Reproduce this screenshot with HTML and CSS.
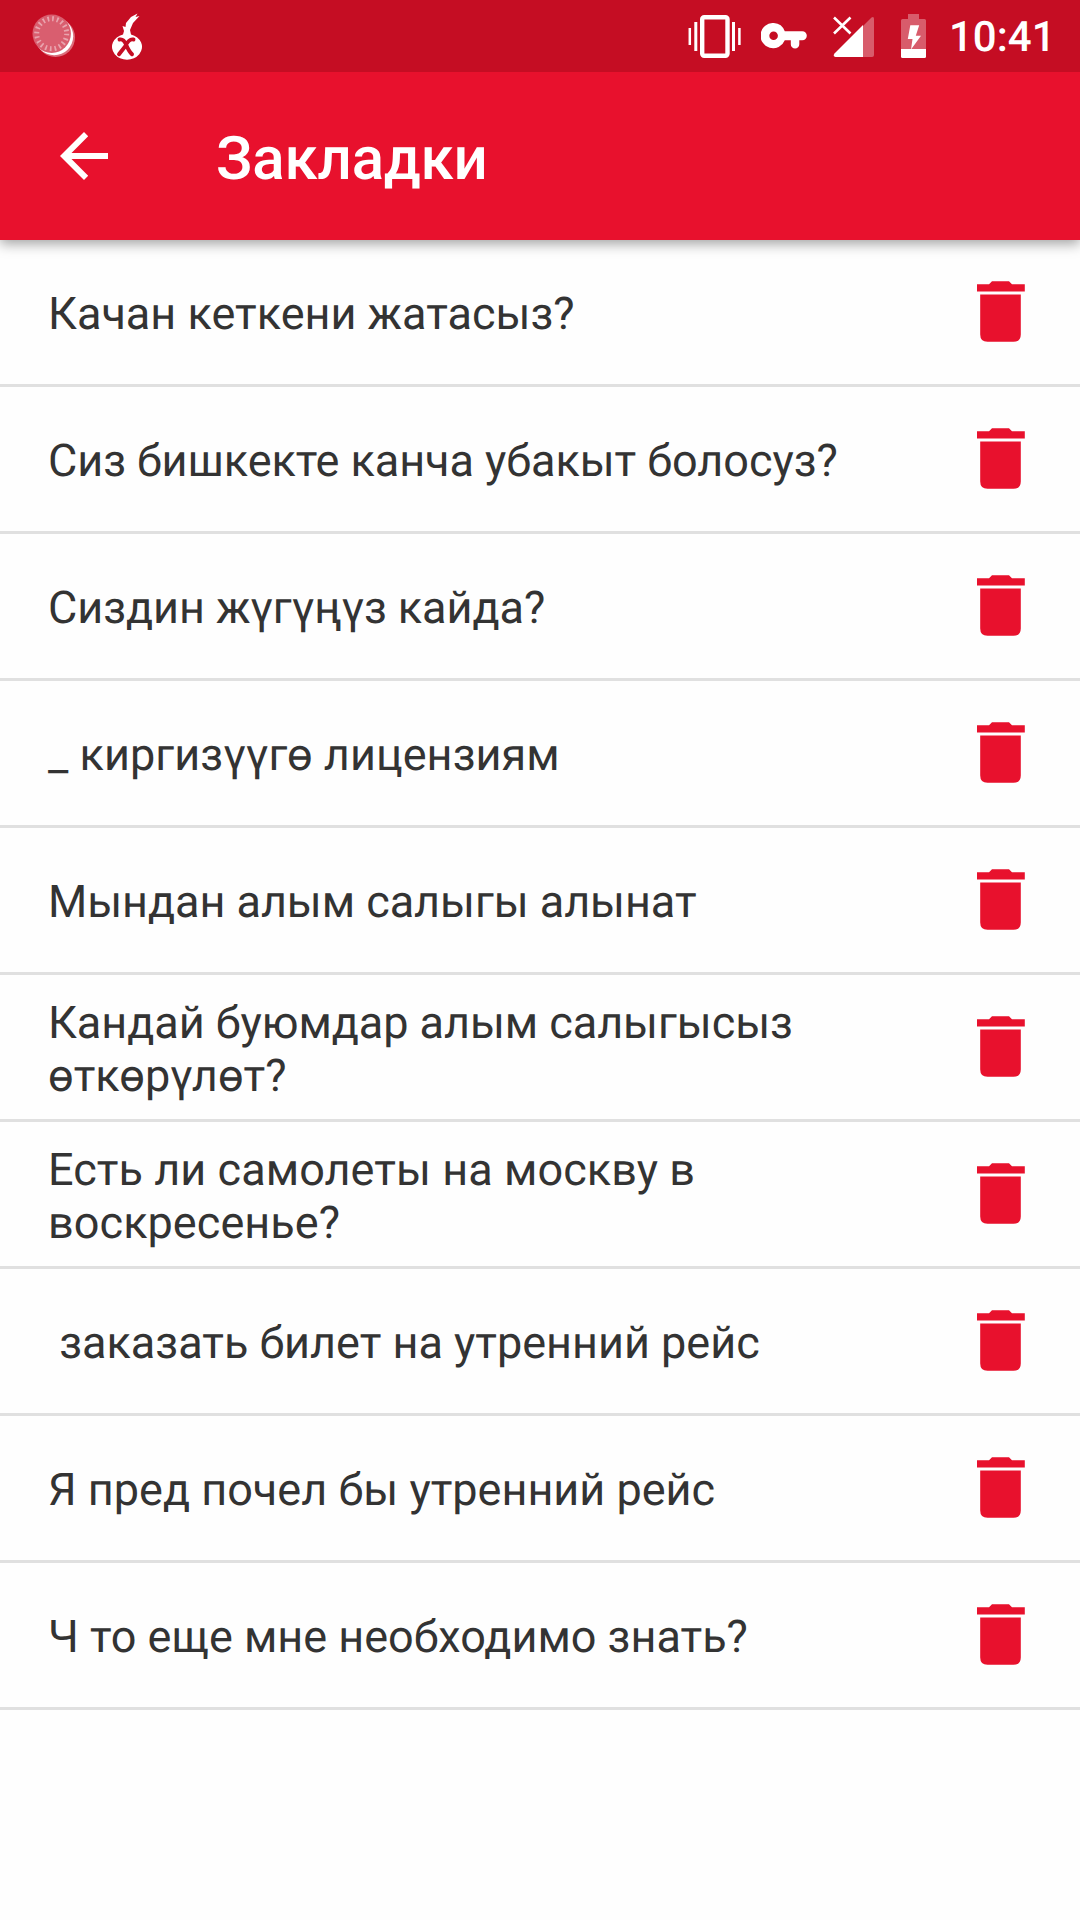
FILE: index.html
```html
<!DOCTYPE html>
<html lang="ru">
<head>
<meta charset="utf-8">
<title>Закладки</title>
<link rel="stylesheet" href="styles.css">
</head>
<body>
<svg class="defs" width="0" height="0" aria-hidden="true">
  <symbol id="trash" viewBox="0 0 48 61">
    <path d="M0 3.200H12L15 .2H32L35 3.200H47.800V10.600H0zM3.200 13.600H43.800V53.500Q43.800 60.800 36.500 60.800H10.500Q3.200 60.800 3.200 53.500z"/>
  </symbol>
</svg>
<header class="top">
  <div class="status">
    <div class="notifications">
      <svg width="44" height="44" viewBox="32 13 44 44">
        <circle cx="55.500" cy="37.500" r="19.500" fill="#fff" opacity=".4"/>
        <circle cx="54.200" cy="36.200" r="19" fill="#fff"/>
        <circle cx="51.700" cy="33.700" r="19.200" fill="#d95e6f"/>
        <circle cx="51.700" cy="33.700" r="15" fill="none" stroke="#e9a4ae" stroke-width="5" stroke-dasharray="1.700 3.012"/>
      </svg>
      <svg width="32" height="48" viewBox="111 13 32 48">
        <path d="M137.500 13.500L131 17L126 23L125.500 27L122.500 26L124 31L123 34.500A15 12.800 0 1 0 131 34.500L130 30L133 23L139.500 16L135.500 17z" fill="#fff"/>
        <path d="M119.500 39.500Q123.500 38.500 126 44.500Q129 51.500 132 54.300M133.500 39.500Q129 38.500 125.500 46L119 54.300" fill="none" stroke="#c50d23" stroke-width="3.900" stroke-linecap="round"/>
      </svg>
    </div>
    <div class="system">
      <svg width="53" height="44" viewBox="688 14 53 44" fill="none" stroke="#fff">
        <rect x="702.200" y="17.200" width="25.300" height="38.500" rx="2" stroke-width="4.400"/>
        <path d="M695.800 22V51M733.500 22V51" stroke-width="3"/>
        <path d="M689.800 28V45M739.400 28V45" stroke-width="2.500"/>
      </svg>
      <svg class="key" width="46" height="26" viewBox="760.700 22.700 46 26">
        <path fill="#fff" fill-rule="evenodd" d="M773.500 22.700A12.600 12.600 0 0 1 784.500 31H802A4.500 4.500 0 0 1 802 40H799V44A4.200 4.200 0 0 1 790.500 44V40H784.500A12.600 12.600 0 1 1 773.500 22.700zM773.300 31.200A4.300 4.300 0 1 0 773.300 39.800A4.300 4.300 0 1 0 773.300 31.200z"/>
      </svg>
      <svg class="signal" width="42" height="42" viewBox="832 16 42 42">
        <path d="M863 26L871.500 17.500Q874 16 874 19V55Q874 57 872 57H863z" fill="#fff" opacity=".33"/>
        <path d="M834.500 53.500L863 25V57H835.500Q832.500 56.500 834.500 53.500z" fill="#fff"/>
        <path d="M834 17.500L850.500 33.500M850.500 17.500L834 33.500" stroke="#fff" stroke-width="2.600"/>
      </svg>
      <svg class="battery" width="25" height="44" viewBox="901 14 25 44">
        <path d="M908 14H919V19H924.500Q926 19 926 20.500V49H901V20.500Q901 19 902.500 19H908z" fill="#fff" opacity=".33"/>
        <path d="M901 49H926V56.500Q926 58 924.500 58H902.500Q901 58 901 56.500z" fill="#fff"/>
        <path d="M910.300 25.300H919.200L915.800 35.700H921L911 49.500L912.500 39H907.800z" fill="#fff"/>
      </svg>
      <time class="clock">10:41</time>
    </div>
  </div>
  <div class="appbar">
    <svg class="back" width="48" height="48" viewBox="0 0 48 48"><path d="M48 21H11.500L28.200 4.200L24 0L0 24L24 48L28.200 43.800L11.500 27H48z" fill="#fff"/></svg>
    <h1 class="title">Закладки</h1>
  </div>
</header>
<main class="list">
  <div class="row"><p class="phrase">Качан кеткени жатасыз?</p><svg class="trash"><use href="#trash"/></svg></div>
  <div class="row"><p class="phrase tight">Сиз бишкекте канча убакыт болосуз?</p><svg class="trash"><use href="#trash"/></svg></div>
  <div class="row"><p class="phrase tight">Сиздин жүгүңүз кайда?</p><svg class="trash"><use href="#trash"/></svg></div>
  <div class="row"><p class="phrase loose">_ киргизүүгө лицензиям</p><svg class="trash"><use href="#trash"/></svg></div>
  <div class="row"><p class="phrase tight">Мындан алым салыгы алынат</p><svg class="trash"><use href="#trash"/></svg></div>
  <div class="row"><p class="phrase double tight">Кандай буюмдар алым салыгысыз <span class="loose">өткөрүлөт?</span></p><svg class="trash"><use href="#trash"/></svg></div>
  <div class="row"><p class="phrase double loose">Есть ли самолеты на москву в воскресенье?</p><svg class="trash"><use href="#trash"/></svg></div>
  <div class="row"><p class="phrase">&nbsp;заказать билет на утренний рейс</p><svg class="trash"><use href="#trash"/></svg></div>
  <div class="row"><p class="phrase">Я пред почел бы утренний рейс</p><svg class="trash"><use href="#trash"/></svg></div>
  <div class="row"><p class="phrase">Ч то еще мне необходимо знать?</p><svg class="trash"><use href="#trash"/></svg></div>
</main>
</body>
</html>
```
FILE: styles.css
```css
* { box-sizing: border-box; }
body { margin: 0; min-height: 1920px; background: #fefefe; font-family: Roboto, "Noto Sans", sans-serif; text-rendering: geometricPrecision; }
.defs { display: block; }
.top { box-shadow: 0 4px 12px rgba(0, 0, 0, .36); }
.status { height: 72px; display: flex; justify-content: space-between; background: #c50d23; }
.notifications { display: flex; align-items: flex-start; gap: 35px; padding: 13px 0 0 32px; }
.system { display: flex; align-items: flex-start; padding: 14px 26px 0 0; }
.key { margin: 9px 0 0 20px; }
.signal { margin: 2px 0 0 25px; }
.battery { margin-left: 27px; }
.clock { margin: -1px 0 0 23px; width: 105px; white-space: nowrap; color: #fff; font-size: 42px; font-weight: 500; line-height: 50px; }
.appbar { height: 168px; display: flex; align-items: flex-start; background: #e8112d; }
.back { margin: 60px 0 0 60px; }
.title { margin: 52px 0 0 108px; color: #fff; font-size: 60px; font-weight: 500; line-height: 70px; letter-spacing: -.15px; }
.row { height: 147px; display: flex; align-items: center; justify-content: space-between; padding: 0 55px 0 48px; border-bottom: 3px solid #e0e0e0; }
.phrase { margin: 2px 0 0; width: 825px; color: #333; font-size: 45px; line-height: 53px; }
.double { margin-top: 4px; }
.tight { letter-spacing: -.06px; }
.loose { letter-spacing: .06px; }
.trash { width: 48px; height: 61px; margin-bottom: 1px; fill: #e8112d; }
```
